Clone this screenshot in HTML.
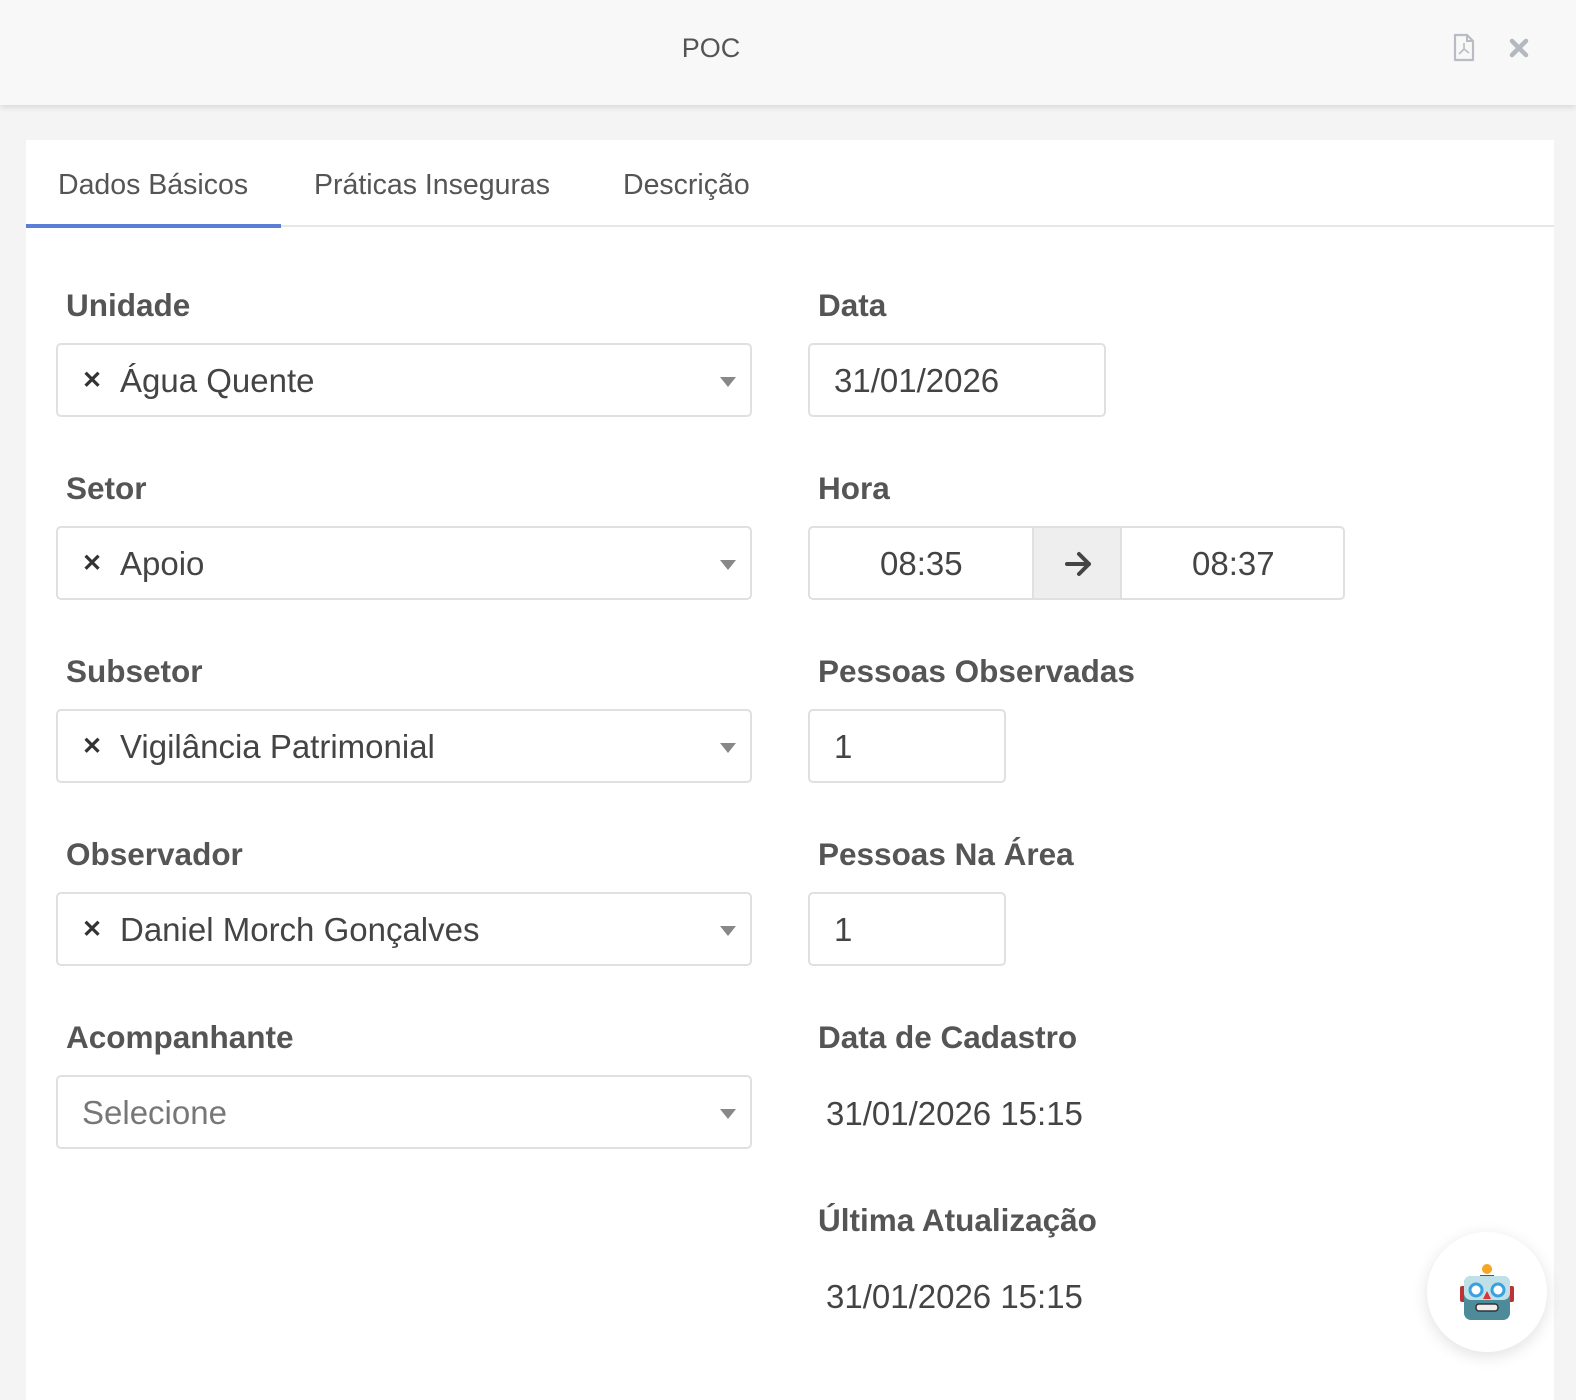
<!DOCTYPE html>
<html><head><meta charset="utf-8"><style>
*{box-sizing:border-box;margin:0;padding:0}
body{width:1576px;height:1390px;background:#f4f4f4;font-family:"Liberation Sans",sans-serif;color:#555;position:relative;overflow:hidden}
.hdr{position:absolute;left:0;top:0;width:1576px;height:105px;background:#f8f8f8;box-shadow:0 2px 6px rgba(0,0,0,.12);z-index:2}
.hdr .t{position:absolute;left:0;width:1422px;top:33px;text-align:center;font-size:27px;color:#555}
.card{position:absolute;left:26px;top:140px;width:1528px;height:1260px;background:#fff}
.tabs{position:absolute;left:0;top:0;width:1528px;height:87px;border-bottom:2px solid #e6e6e6}
.tab{position:absolute;top:29px;font-size:28.5px;color:#555}
.ul{position:absolute;left:0;top:84px;width:255px;height:4px;background:#5b7fd6}
.lbl{position:absolute;font-size:31.5px;font-weight:bold;color:#555}
.box{position:absolute;height:74px;border:2px solid #e0e0e0;border-radius:5px;background:#fff;font-size:33px;color:#444}
.box .x{position:absolute;left:24px;top:21px;font-size:24px;font-weight:bold;color:#333}
.box .v{position:absolute;left:62px;top:17px}
.box .ar{position:absolute;right:14px;top:32px;width:0;height:0;border-left:8px solid transparent;border-right:8px solid transparent;border-top:10px solid #888}
.val{position:absolute;font-size:33px;color:#444}
</style></head><body>
<div class="hdr"><div class="t">POC</div>
<svg style="position:absolute;left:1453px;top:33px" width="22" height="29" viewBox="0 0 22 29"><path d="M2 2h12l6 6v19H2z" fill="none" stroke="#b9bcc2" stroke-width="2.2" stroke-linejoin="round"/><path d="M14 2v6h6" fill="none" stroke="#b9bcc2" stroke-width="2"/><path d="M11 10v6M11 16l-5 5M11 16l5 4" stroke="#b9bcc2" stroke-width="1.6" fill="none"/></svg>
<svg style="position:absolute;left:1509px;top:38px" width="20" height="20" viewBox="0 0 20 20"><path d="M3 3L17 17M17 3L3 17" stroke="#b4b8bf" stroke-width="4.5" stroke-linecap="round"/></svg>
</div>
<div class="card">
<div class="tabs"><div class="tab" style="left:32px">Dados Básicos</div><div class="tab" style="left:288px">Práticas Inseguras</div><div class="tab" style="left:597px">Descrição</div><div class="ul"></div></div>
</div>
<div class="lbl" style="left:66px;top:287px">Unidade</div>
<div class="box" style="left:56px;top:343px;width:696px"><span class="x">✕</span><span class="v">Água Quente</span><span class="ar"></span></div>
<div class="lbl" style="left:66px;top:470px">Setor</div>
<div class="box" style="left:56px;top:526px;width:696px"><span class="x">✕</span><span class="v">Apoio</span><span class="ar"></span></div>
<div class="lbl" style="left:66px;top:653px">Subsetor</div>
<div class="box" style="left:56px;top:709px;width:696px"><span class="x">✕</span><span class="v">Vigilância Patrimonial</span><span class="ar"></span></div>
<div class="lbl" style="left:66px;top:836px">Observador</div>
<div class="box" style="left:56px;top:892px;width:696px"><span class="x">✕</span><span class="v">Daniel Morch Gonçalves</span><span class="ar"></span></div>
<div class="lbl" style="left:66px;top:1019px">Acompanhante</div>
<div class="box" style="left:56px;top:1075px;width:696px"><span class="v" style="left:24px;color:#777">Selecione</span><span class="ar"></span></div>

<div class="lbl" style="left:818px;top:287px">Data</div>
<div class="box" style="left:808px;top:343px;width:298px"><span class="v" style="left:24px">31/01/2026</span></div>
<div class="lbl" style="left:818px;top:470px">Hora</div>
<div class="box" style="left:808px;top:526px;width:537px;overflow:hidden"><span class="v" style="left:70px">08:35</span>
<div style="position:absolute;left:222px;top:0;width:90px;height:72px;background:#eee;border-left:2px solid #e0e0e0;border-right:2px solid #e0e0e0"><svg style="position:absolute;left:30px;top:22px" width="30" height="28" viewBox="0 0 30 28"><path d="M3 14h22M15 4l10 10-10 10" stroke="#444" stroke-width="4" fill="none" stroke-linecap="round" stroke-linejoin="round"/></svg></div>
<span class="v" style="left:382px">08:37</span></div>
<div class="lbl" style="left:818px;top:653px">Pessoas Observadas</div>
<div class="box" style="left:808px;top:709px;width:198px"><span class="v" style="left:24px">1</span></div>
<div class="lbl" style="left:818px;top:836px">Pessoas Na Área</div>
<div class="box" style="left:808px;top:892px;width:198px"><span class="v" style="left:24px">1</span></div>
<div class="lbl" style="left:818px;top:1019px">Data de Cadastro</div>
<div class="val" style="left:826px;top:1095px">31/01/2026 15:15</div>
<div class="lbl" style="left:818px;top:1202px">Última Atualização</div>
<div class="val" style="left:826px;top:1278px">31/01/2026 15:15</div>

<div style="position:absolute;left:1427px;top:1232px;width:120px;height:120px;border-radius:50%;background:#fff;box-shadow:0 4px 16px rgba(0,0,0,.12)">
<svg style="position:absolute;left:32px;top:30px" width="56" height="60" viewBox="0 0 56 60">
<rect x="1" y="24" width="6" height="16" rx="2" fill="#b33"/><rect x="49" y="24" width="6" height="16" rx="2" fill="#b33"/>
<circle cx="28" cy="7" r="5" fill="#f5a623"/><path d="M21 13h14v4H21z" fill="#5b4a8a"/>
<rect x="5" y="14" width="46" height="44" rx="7" fill="#4d8a9a"/><rect x="5" y="14" width="46" height="24" rx="7" fill="#bfe0e6"/>
<circle cx="17" cy="28" r="6" fill="#fff" stroke="#3aa0e0" stroke-width="3"/><circle cx="39" cy="28" r="6" fill="#fff" stroke="#3aa0e0" stroke-width="3"/>
<path d="M28 29l4 8h-8z" fill="#d33"/><rect x="17" y="42" width="22" height="7" rx="3" fill="#eee" stroke="#333" stroke-width="1.5"/>
</svg></div>
</body></html>
